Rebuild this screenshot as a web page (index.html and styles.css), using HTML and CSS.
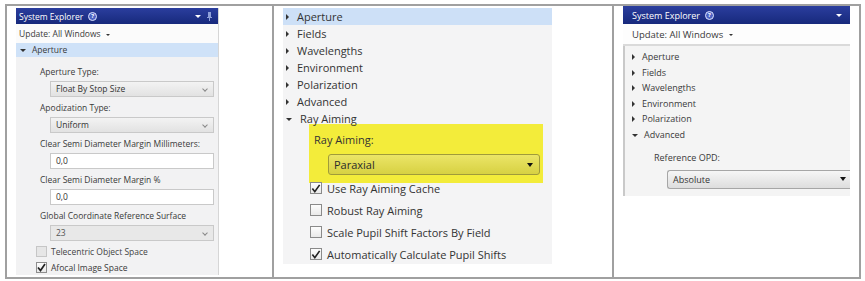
FILE: index.html
```html
<!DOCTYPE html>
<html lang="en">
<head>
    <meta charset="UTF-8">
    <title>System Explorer</title>
    <link rel="stylesheet" href="styles.css">
</head>
<body>
    <div class="frame">

        <!-- left: aperture expanded -->
        <div class="cell c1">
            <div class="pane p1">
                <div class="hdr">
                    <span class="title">System Explorer</span>
                    <span class="help">?</span>
                    <span class="spacer"></span>
                    <span class="tri-down white"></span>
                    <svg class="pin" width="5" height="9" viewBox="0 0 5 9"><rect x="1" y="0" width="3" height="6" fill="#8fa0d8"/><rect x="0" y="5" width="5" height="1" fill="#8fa0d8"/><rect x="2" y="6" width="1" height="3" fill="#8fa0d8"/></svg>
                </div>
                <div class="update">Update: All Windows <span class="tri-down small"></span></div>
                <div class="node sel"><span class="tri-down"></span>Aperture</div>
                <div class="props">
                    <div class="lbl">Aperture Type:</div>
                    <div class="combo">Float By Stop Size<span class="chev"></span></div>
                    <div class="lbl">Apodization Type:</div>
                    <div class="combo">Uniform<span class="chev"></span></div>
                    <div class="lbl">Clear Semi Diameter Margin Millimeters:</div>
                    <div class="textbox">0,0</div>
                    <div class="lbl">Clear Semi Diameter Margin %</div>
                    <div class="textbox">0,0</div>
                    <div class="lbl">Global Coordinate Reference Surface</div>
                    <div class="combo disabled">23<span class="chev"></span></div>
                    <div class="check disabled"><span class="box"></span>Telecentric Object Space</div>
                    <div class="check"><span class="box on"><svg width="9" height="9" viewBox="0 0 9 9"><path d="M1 4.5 L3.5 7.5 L8 1" fill="none" stroke="#222" stroke-width="1.7"/></svg></span>Afocal Image Space</div>
                </div>
            </div>
        </div>

        <!-- middle: ray aiming -->
        <div class="cell c2">
            <div class="pane p2">
                <div class="row sel"><span class="tri-right"></span>Aperture</div>
                <div class="row"><span class="tri-right"></span>Fields</div>
                <div class="row"><span class="tri-right"></span>Wavelengths</div>
                <div class="row"><span class="tri-right"></span>Environment</div>
                <div class="row"><span class="tri-right"></span>Polarization</div>
                <div class="row"><span class="tri-right"></span>Advanced</div>
                <div class="row last"><span class="tri-down"></span>Ray Aiming</div>
                <div class="yellow">
                    <div class="ylbl">Ray Aiming:</div>
                    <div class="ycombo">Paraxial<span class="tri-down dark"></span></div>
                </div>
                <div class="checks">
                    <div class="check big"><span class="box on"><svg width="11" height="11" viewBox="0 0 11 11"><path d="M1.5 5.5 L4.2 9 L9.5 1.5" fill="none" stroke="#222" stroke-width="1.8"/></svg></span>Use Ray Aiming Cache</div>
                    <div class="check big"><span class="box"></span>Robust Ray Aiming</div>
                    <div class="check big"><span class="box"></span>Scale Pupil Shift Factors By Field</div>
                    <div class="check big"><span class="box on"><svg width="11" height="11" viewBox="0 0 11 11"><path d="M1.5 5.5 L4.2 9 L9.5 1.5" fill="none" stroke="#222" stroke-width="1.8"/></svg></span>Automatically Calculate Pupil Shifts</div>
                </div>
            </div>
        </div>

        <!-- right: advanced -->
        <div class="cell c3">
            <div class="pane p3">
                <div class="hdr tall">
                    <span class="title">System Explorer</span>
                    <span class="help">?</span>
                    <span class="spacer"></span>
                    <span class="tri-down white"></span>
                </div>
                <div class="update u3">Update: All Windows <span class="tri-down small"></span></div>
                <div class="body3">
                    <div class="leaf"><span class="tri-right"></span>Aperture</div>
                    <div class="leaf"><span class="tri-right"></span>Fields</div>
                    <div class="leaf"><span class="tri-right"></span>Wavelengths</div>
                    <div class="leaf"><span class="tri-right"></span>Environment</div>
                    <div class="leaf"><span class="tri-right"></span>Polarization</div>
                    <div class="leaf"><span class="tri-down"></span>Advanced</div>
                    <div class="lbl3">Reference OPD:</div>
                    <div class="combo3">Absolute<span class="tri-down dark"></span></div>
                </div>
            </div>
        </div>

    </div>
</body>
</html>
```

FILE: styles.css
```css
body {
    margin: 0;
    background: #fff;
    font-family: "Open Sans", "Noto Sans", sans-serif;
    color: #3a3a3a;
}

.frame {
    display: flex;
    box-sizing: border-box;
    width: 856px;
    height: 275px;
    margin: 4px 0 0 5px;
    border: 2px solid #a0a0a0;
}

.cell {
    box-sizing: border-box;
    padding-left: 9px;
}

.c1 {
    width: 265px;
    padding-top: 2px;
}

.c2 {
    width: 340px;
    border-left: 2px solid #a0a0a0;
    padding-top: 2px;
}

.c3 {
    flex: 1;
    border-left: 2px solid #a0a0a0;
}

/* triangles */
.tri-down, .tri-right {
    display: inline-block;
    width: 0;
    height: 0;
}

.tri-down {
    border-left: 3px solid transparent;
    border-right: 3px solid transparent;
    border-top: 3px solid #333;
}

.tri-right {
    border-top: 3px solid transparent;
    border-bottom: 3px solid transparent;
    border-left: 3px solid #333;
}

.tri-down.white {
    border-top-color: #fff;
}

.tri-down.small {
    border-left-width: 2px;
    border-right-width: 2px;
    border-top-width: 2px;
    margin-left: 3px;
    vertical-align: middle;
}

.tri-down.dark {
    border-left-width: 3px;
    border-right-width: 3px;
    border-top-width: 4px;
    border-top-color: #111;
}

/* header bar */
.hdr {
    display: flex;
    align-items: center;
    height: 16px;
    padding: 0 6px 0 3px;
    background: linear-gradient(#2b3e9e, #17297c);
    color: #fff;
    font-size: 8.5px;
}

.hdr.tall {
    height: 18px;
    padding-left: 9px;
    padding-right: 8px;
    font-size: 9px;
}

.help {
    display: inline-block;
    box-sizing: border-box;
    width: 9px;
    height: 9px;
    margin-left: 5px;
    border: 1px solid #dfe5ff;
    border-radius: 50%;
    background: #4d63c4;
    font-size: 6px;
    line-height: 7px;
    text-align: center;
    font-weight: bold;
}

.spacer {
    flex: 1;
}

.pin {
    margin-left: 6px;
}

/* left pane */
.p1 {
    display: flex;
    flex-direction: column;
    width: 202px;
    height: 267px;
    border-right: 1px solid #d6d6d6;
    font-size: 8.5px;
}

.update {
    height: 19px;
    line-height: 20px;
    padding-left: 3px;
    background: #fbfbfb;
}

.node {
    height: 14px;
    line-height: 14px;
    padding-left: 4px;
}

.node .tri-down {
    margin-right: 6px;
    vertical-align: middle;
}

.sel {
    background: #cfe2f8;
}

.props {
    flex: 1;
    background: #f2f2f3;
    padding: 8px 4px 0 20px;
}

.lbl {
    height: 14px;
    line-height: 14px;
    margin-top: 4px;
    padding-left: 4px;
}

.lbl:first-child {
    margin-top: 0;
}

.combo, .textbox {
    position: relative;
    box-sizing: border-box;
    height: 16px;
    line-height: 14px;
    margin: 2px 0 0 14px;
    padding-left: 5px;
    border: 1px solid #c9c9c9;
    background: linear-gradient(#f3f3f3, #e2e2e2);
    color: #333;
}

.textbox {
    background: #fff;
}

.combo.disabled {
    background: #e8e8e8;
    color: #555;
}

.chev {
    position: absolute;
    right: 6px;
    top: 5px;
    width: 3px;
    height: 3px;
    border-right: 1px solid #888;
    border-bottom: 1px solid #888;
    transform: rotate(45deg);
}

.check {
    display: flex;
    align-items: center;
    height: 12px;
    margin-top: 4px;
}

.check .box {
    display: inline-flex;
    align-items: center;
    justify-content: center;
    box-sizing: border-box;
    width: 11px;
    height: 11px;
    margin-right: 4px;
    border: 1px solid #8e8e8e;
    background: linear-gradient(#fdfdfd, #e9e9e9);
}

.check.disabled {
    color: #444;
}

.check.disabled .box {
    border-color: #c6c6c6;
    background: #e6e6e6;
}

/* middle pane */
.p2 {
    width: 269px;
    height: 256px;
    background: #f4f4f5;
    font-size: 11px;
    color: #333;
}

.row {
    height: 17px;
    line-height: 17px;
    padding-left: 3px;
}

.row.sel {
    background: #cde0f7;
}

.row.last {
    height: 14px;
}

.row .tri-right {
    margin-right: 8px;
    vertical-align: 1px;
}

.row .tri-down {
    margin-right: 8px;
    vertical-align: 2px;
}

.yellow {
    box-sizing: border-box;
    width: 234px;
    height: 59px;
    margin-left: 26px;
    padding: 7px 3px 0 5px;
    background: #f3ec3a;
}

.ylbl {
    height: 18px;
    line-height: 18px;
}

.ycombo {
    display: flex;
    align-items: center;
    justify-content: space-between;
    box-sizing: border-box;
    height: 21px;
    margin: 5px 0 0 14px;
    padding: 0 6px 0 5px;
    border: 1px solid #a09b3a;
    border-radius: 3px;
    background: linear-gradient(#ebe567, #d7d142);
    color: #2a2a2a;
}

.checks {
    display: flex;
    flex-direction: column;
    gap: 10px;
    margin: -1px 0 0 27px;
}

.check.big {
    margin-top: 0;
}

.check.big .box {
    width: 12px;
    height: 12px;
    margin-right: 5px;
    border-color: #8a8a8a;
}

/* right pane */
.p3 {
    width: 227px;
    font-size: 9px;
}

.u3 {
    height: 20px;
    line-height: 22px;
    padding-left: 9px;
    border-bottom: 2px solid #dadada;
    background: #fdfdfd;
    font-size: 9.5px;
}

.body3 {
    height: 150px;
    box-sizing: border-box;
    padding-top: 3px;
    border-left: 2px solid #c9c9c9;
    background: #f4f4f4;
}

.leaf {
    height: 15.6px;
    line-height: 15.6px;
    padding-left: 7px;
}

.leaf .tri-right {
    margin-right: 7px;
    vertical-align: 0;
}

.leaf .tri-down {
    margin-right: 6px;
    vertical-align: 1px;
}

.lbl3 {
    height: 14px;
    line-height: 14px;
    margin-top: 8px;
    padding-left: 29px;
}

.combo3 {
    display: flex;
    align-items: center;
    justify-content: space-between;
    box-sizing: border-box;
    height: 19px;
    margin: 5px 0 0 42px;
    padding: 0 4px 0 5px;
    border: 1px solid #a6a6a6;
    border-right: none;
    border-radius: 3px 0 0 3px;
    background: linear-gradient(#f6f6f6, #dddddd);
    color: #333;
}
```
